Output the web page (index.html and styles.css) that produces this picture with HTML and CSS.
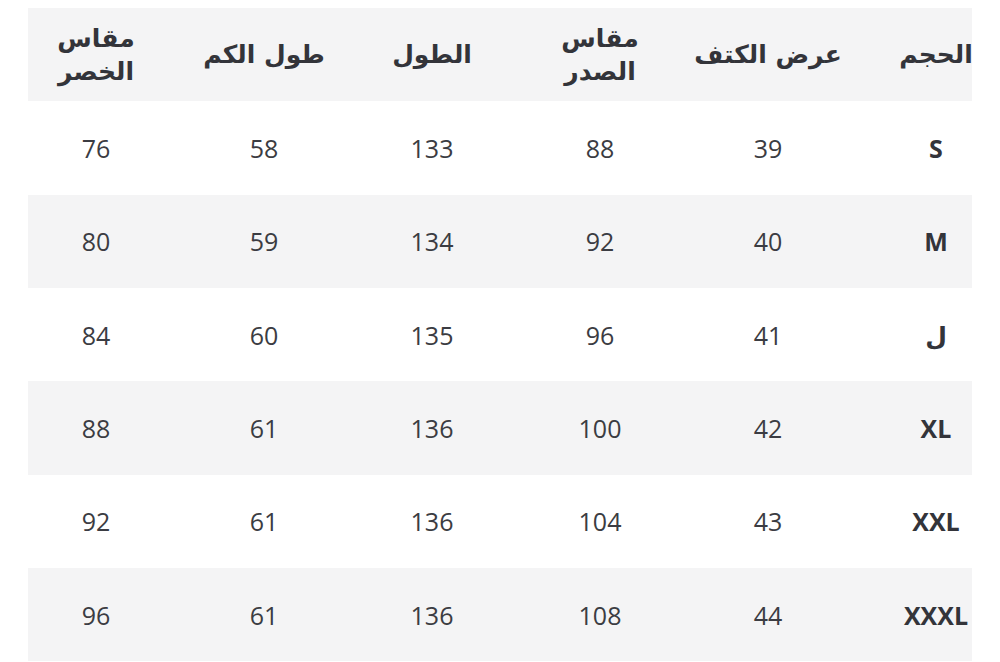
FILE: index.html
```html
<!DOCTYPE html>
<html lang="ar" dir="rtl">
<head>
<meta charset="utf-8">
<link rel="stylesheet" href="styles.css">
</head>
<body>
<div class="frame">
  <div class="table">
    <div class="row head">
      <div class="cell">الحجم</div>
      <div class="cell">عرض الكتف</div>
      <div class="cell">مقاس<br>الصدر</div>
      <div class="cell">الطول</div>
      <div class="cell">طول الكم</div>
      <div class="cell">مقاس<br>الخصر</div>
    </div>
    <div class="row">
      <div class="cell size">S</div><div class="cell">39</div><div class="cell">88</div><div class="cell">133</div><div class="cell">58</div><div class="cell">76</div>
    </div>
    <div class="row alt">
      <div class="cell size">M</div><div class="cell">40</div><div class="cell">92</div><div class="cell">134</div><div class="cell">59</div><div class="cell">80</div>
    </div>
    <div class="row">
      <div class="cell size">ل</div><div class="cell">41</div><div class="cell">96</div><div class="cell">135</div><div class="cell">60</div><div class="cell">84</div>
    </div>
    <div class="row alt">
      <div class="cell size">XL</div><div class="cell">42</div><div class="cell">100</div><div class="cell">136</div><div class="cell">61</div><div class="cell">88</div>
    </div>
    <div class="row">
      <div class="cell size">XXL</div><div class="cell">43</div><div class="cell">104</div><div class="cell">136</div><div class="cell">61</div><div class="cell">92</div>
    </div>
    <div class="row alt">
      <div class="cell size">XXXL</div><div class="cell">44</div><div class="cell">108</div><div class="cell">136</div><div class="cell">61</div><div class="cell">96</div>
    </div>
  </div>
</div>
</body>
</html>
```
FILE: styles.css
```css
html, body {
  margin: 0;
  padding: 0;
  background: #ffffff;
  overflow: hidden;
}
body {
  padding-top: 8px;
  font-family: "Open Sans", "DejaVu Sans", sans-serif;
  color: #3b3c42;
}
.frame {
  margin: 0 28px;
  width: 944px;
  overflow: hidden;
}
.table {
  width: 1008px;
  margin-right: -48px;
}
.row {
  display: grid;
  grid-template-columns: repeat(6, 168px);
  height: 93.33px;
  align-items: center;
}
.row.head, .row.alt {
  background: #f4f4f5;
}
.cell {
  text-align: center;
  font-size: 25px;
  line-height: 32px;
}
.head .cell {
  font-family: "DejaVu Sans", sans-serif;
  font-weight: bold;
  font-size: 25px;
  line-height: 33px;
  color: #33343a;
}
.cell.size {
  font-family: "Open Sans", "DejaVu Sans", sans-serif;
  font-weight: bold;
  color: #33343a;
}
```
